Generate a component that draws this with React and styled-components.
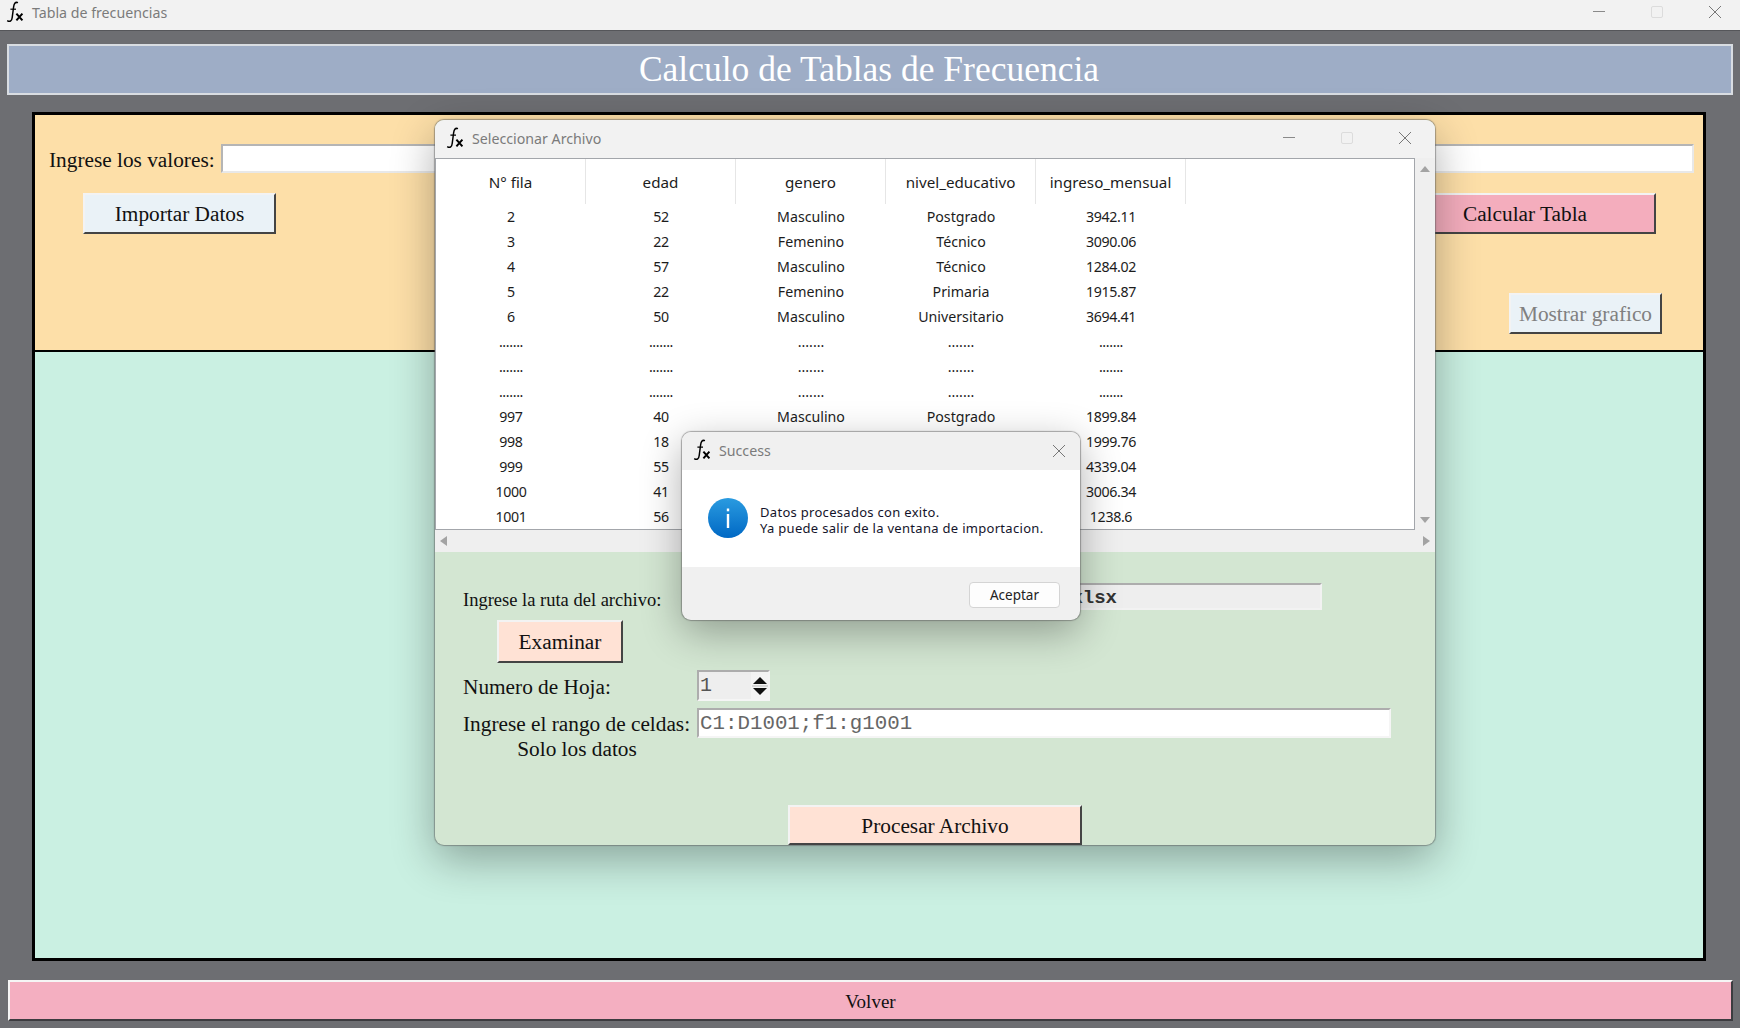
import React from "react";
import styled, { createGlobalStyle } from "styled-components";

const GlobalStyle = createGlobalStyle`
  html, body {
    margin: 0;
    padding: 0;
    background: #6d6e72;
  }
  * {
    box-sizing: border-box;
  }
`;

const columns = ["N° fila", "edad", "genero", "nivel_educativo", "ingreso_mensual"];

// filas 998-1001: genero y nivel quedan tapados por el dialogo
const rows = [
  ["2", "52", "Masculino", "Postgrado", "3942.11"],
  ["3", "22", "Femenino", "Técnico", "3090.06"],
  ["4", "57", "Masculino", "Técnico", "1284.02"],
  ["5", "22", "Femenino", "Primaria", "1915.87"],
  ["6", "50", "Masculino", "Universitario", "3694.41"],
  [".......", ".......", ".......", ".......", "......."],
  [".......", ".......", ".......", ".......", "......."],
  [".......", ".......", ".......", ".......", "......."],
  ["997", "40", "Masculino", "Postgrado", "1899.84"],
  ["998", "18", "", "", "1999.76"],
  ["999", "55", "", "", "4339.04"],
  ["1000", "41", "", "", "3006.34"],
  ["1001", "56", "", "", "1238.6"],
];

const FxIcon = () => (
  <svg width="18" height="22" viewBox="0 0 18 22" fill="none" stroke="#000">
    <path d="M12 1.6 C9 0.6 8 3 7.6 6 L6.2 16.5 C5.8 19.8 4.2 21.4 1.2 19.6" strokeWidth="1.5" />
    <path d="M4.4 8.2 H10" strokeWidth="1.2" />
    <path d="M10.4 12.6 L16.4 19.4 M16.4 12.6 L10.4 19.4" strokeWidth="2" />
  </svg>
);

const MinIcon = () => (
  <svg width="14" height="14" viewBox="0 0 14 14" fill="none" stroke="#8a8a8a">
    <path d="M1 6.5 H13" />
  </svg>
);

const MaxIcon = () => (
  <svg width="14" height="14" viewBox="0 0 14 14" fill="none" stroke="#dcdcdc">
    <rect x="1.5" y="1.5" width="11" height="11" rx="1.5" />
  </svg>
);

const CloseIcon = () => (
  <svg width="14" height="14" viewBox="0 0 14 14" fill="none" stroke="#777">
    <path d="M1 1 L13 13 M13 1 L1 13" />
  </svg>
);

const InfoIcon = () => (
  <svg width="40" height="40" viewBox="0 0 40 40">
    <defs>
      <linearGradient id="infoBlue" x1="0" y1="0" x2="0" y2="1">
        <stop offset="0" stopColor="#2a9be0" />
        <stop offset="1" stopColor="#0068c4" />
      </linearGradient>
    </defs>
    <circle cx="20" cy="20" r="20" fill="url(#infoBlue)" />
    <rect x="18.8" y="16" width="2.4" height="14" fill="#fff" />
    <rect x="18.8" y="10.5" width="2.4" height="2.8" fill="#fff" />
  </svg>
);

const Triangle = ({ dir }) => {
  const shapes = {
    up: "1,9 6,3 11,9",
    down: "1,3 6,9 11,3",
    left: "9,1 2,6 9,11",
    right: "3,1 10,6 3,11",
  };
  return (
    <svg width="12" height="12" viewBox="0 0 12 12">
      <polygon points={shapes[dir]} fill="#a3a3a3" />
    </svg>
  );
};

const App = () => {
  return (
    <Screen>
      <GlobalStyle />
      <TitleBar>
        <FxIcon />
        <TitleText>Tabla de frecuencias</TitleText>
        <Controls>
          <MinIcon />
          <MaxIcon />
          <CloseIcon />
        </Controls>
      </TitleBar>

      <Header>Calculo de Tablas de Frecuencia</Header>

      <MainFrame>
        <TopPanel>
          <ValuesRow>
            <SerifLabel>Ingrese los valores:</SerifLabel>
            <ValuesInput readOnly />
          </ValuesRow>
          <ActionsRow>
            <RaisedButton $bg="#eaf2f7" $w={193} $h={41}>Importar Datos</RaisedButton>
            <RaisedButton $bg="#f4adbd" $w={262} $h={41}>Calcular Tabla</RaisedButton>
          </ActionsRow>
          <ChartRow>
            <RaisedButton $bg="#eaf2f7" $w={153} $h={41} $muted>Mostrar grafico</RaisedButton>
          </ChartRow>
        </TopPanel>
        <BottomPanel />
      </MainFrame>

      <BackButton>Volver</BackButton>

      <FileWindow>
        <WindowBar>
          <FxIcon />
          <TitleText>Seleccionar Archivo</TitleText>
          <WindowControls>
            <MinIcon />
            <MaxIcon />
            <CloseIcon />
          </WindowControls>
        </WindowBar>

        <TableArea>
          <TableBox>
            <HeadRow>
              {columns.map((c) => (
                <HeadCell key={c}>{c}</HeadCell>
              ))}
            </HeadRow>
            {rows.map((row, i) => (
              <DataRow key={i}>
                {row.map((v, j) => (
                  <DataCell key={j} $numeric={j !== 2 && j !== 3}>{v}</DataCell>
                ))}
              </DataRow>
            ))}
          </TableBox>
          <VScroll>
            <Triangle dir="up" />
            <Triangle dir="down" />
          </VScroll>
        </TableArea>
        <HScroll>
          <Triangle dir="left" />
          <Triangle dir="right" />
        </HScroll>

        <FileForm>
          <PathRow>
            <PathLabel>Ingrese la ruta del archivo:</PathLabel>
            <PathInput readOnly value=".xlsx" />
          </PathRow>
          <BrowseRow>
            <RaisedButton $bg="#ffe2d5" $w={126} $h={43}>Examinar</RaisedButton>
          </BrowseRow>
          <SheetRow>
            <FormLabel>Numero de Hoja:</FormLabel>
            <Spinner>
              <SpinnerValue readOnly value="1" />
              <SpinnerArrows>
                <svg width="16" height="26" viewBox="0 0 16 26">
                  <polygon points="1,11 8,4 15,11" fill="#111" />
                  <path d="M0 13 H16" stroke="#bbb" />
                  <polygon points="1,15 8,22 15,15" fill="#111" />
                </svg>
              </SpinnerArrows>
            </Spinner>
          </SheetRow>
          <RangeRow>
            <FormLabel>Ingrese el rango de celdas:</FormLabel>
            <RangeInput readOnly value="C1:D1001;f1:g1001" />
          </RangeRow>
          <HintLabel>Solo los datos</HintLabel>
          <SubmitRow>
            <RaisedButton $bg="#ffe2d5" $w={294} $h={40}>Procesar Archivo</RaisedButton>
          </SubmitRow>
        </FileForm>
      </FileWindow>

      <SuccessDialog>
        <DialogBar>
          <FxIcon />
          <TitleText>Success</TitleText>
          <DialogClose>
            <CloseIcon />
          </DialogClose>
        </DialogBar>
        <DialogBody>
          <InfoIcon />
          <DialogText>
            <div>Datos procesados con exito.</div>
            <div>Ya puede salir de la ventana de importacion.</div>
          </DialogText>
        </DialogBody>
        <DialogFooter>
          <AcceptButton>Aceptar</AcceptButton>
        </DialogFooter>
      </SuccessDialog>
    </Screen>
  );
};

const Screen = styled.div`
  position: relative;
  width: 1740px;
  height: 1028px;
  overflow: hidden;
  background: #6d6e72;
  font-family: "Liberation Serif", serif;
`;

const TitleBar = styled.div`
  display: flex;
  align-items: center;
  height: 31px;
  padding: 0 18px 6px 6px;
  background: #f2f2f2;
  border-bottom: 1px solid #55565a;
`;

const TitleText = styled.span`
  margin-left: 8px;
  font-family: "Noto Sans", sans-serif;
  font-size: 14.2px;
  color: #7b7b7b;
`;

const Controls = styled.div`
  display: flex;
  align-items: center;
  gap: 44px;
  margin-left: auto;
`;

const Header = styled.div`
  display: flex;
  align-items: center;
  justify-content: center;
  width: 1726px;
  height: 51px;
  margin: 13px 0 0 7px;
  padding: 0 2px 2px 0;
  background: #9eadc6;
  border: 2px solid #d9dde2;
  color: #fff;
  font-size: 35.5px;
`;

const MainFrame = styled.div`
  display: flex;
  flex-direction: column;
  width: 1674px;
  height: 849px;
  margin: 17px 0 0 32px;
  border: 3px solid #000;
`;

const TopPanel = styled.div`
  height: 237px;
  padding: 29px 9px 0 14px;
  background: #fddfa8;
  border-bottom: 2px solid #000;
`;

const ValuesRow = styled.div`
  display: flex;
  align-items: center;
  gap: 6px;
`;

const SerifLabel = styled.span`
  padding-top: 2px;
  font-size: 21.3px;
  line-height: 24px;
  color: #111;
  white-space: nowrap;
`;

const ValuesInput = styled.input`
  flex: 1;
  height: 29px;
  background: #fff;
  border: 2px solid #e8e8e8;
  border-top-color: #b5b5b5;
  border-left-color: #b5b5b5;
  outline: none;
`;

const ActionsRow = styled.div`
  display: flex;
  justify-content: space-between;
  margin-top: 20px;
  padding: 0 38px 0 34px;
`;

const ChartRow = styled.div`
  display: flex;
  justify-content: flex-end;
  margin-top: 59px;
  padding-right: 32px;
`;

const RaisedButton = styled.button`
  width: ${(p) => p.$w}px;
  height: ${(p) => p.$h}px;
  padding: 2px 0 0;
  background: ${(p) => p.$bg};
  border: 2px solid #444;
  border-top-color: #f3f3f3;
  border-left-color: #f3f3f3;
  color: ${(p) => (p.$muted ? "#808080" : "#111")};
  font-family: "Liberation Serif", serif;
  font-size: 21.3px;
`;

const BottomPanel = styled.div`
  flex: 1;
  background: #caf0e2;
`;

const BackButton = styled.button`
  display: block;
  width: 1725px;
  height: 41px;
  margin: 19px 0 0 8px;
  padding: 2px 0 0;
  background: #f4afc1;
  border: 2px solid #3c3c40;
  border-top-color: #f5f5f5;
  border-left-color: #f5f5f5;
  color: #111;
  font-family: "Liberation Serif", serif;
  font-size: 19px;
`;

const FileWindow = styled.div`
  position: absolute;
  left: 435px;
  top: 120px;
  display: flex;
  flex-direction: column;
  width: 1000px;
  height: 725px;
  overflow: hidden;
  background: #d3e6d2;
  border-radius: 9px;
  box-shadow: 0 0 1px 1px rgba(90, 90, 90, 0.5), 0 14px 44px rgba(0, 0, 0, 0.32);
`;

const WindowBar = styled.div`
  display: flex;
  flex: none;
  align-items: center;
  height: 38px;
  padding: 0 23px 2px 11px;
  background: #f2f2f2;
`;

const WindowControls = styled.div`
  display: flex;
  align-items: center;
  gap: 44px;
  margin-left: auto;
`;

const TableArea = styled.div`
  display: flex;
  flex: none;
  height: 372px;
  background: #efefef;
`;

const TableBox = styled.div`
  width: 980px;
  height: 372px;
  overflow: hidden;
  background: #fff;
  border: 1px solid #a3a6ab;
  color: #1c1c1c;
  font-family: "Noto Sans", sans-serif;
`;

const HeadRow = styled.div`
  display: flex;
  height: 45px;
`;

const HeadCell = styled.div`
  display: flex;
  align-items: center;
  justify-content: center;
  width: 150px;
  border-right: 1px solid #e6e6e6;
  font-size: 15.2px;
`;

const DataRow = styled.div`
  display: flex;
  height: 25px;
`;

const DataCell = styled.div`
  width: 150px;
  font-size: 14.2px;
  letter-spacing: ${(p) => (p.$numeric ? "-0.35px" : "0")};
  line-height: 25px;
  text-align: center;
`;

const VScroll = styled.div`
  display: flex;
  flex: 1;
  flex-direction: column;
  align-items: center;
  justify-content: space-between;
  padding: 5px 0 4px;
`;

const HScroll = styled.div`
  display: flex;
  flex: none;
  align-items: center;
  justify-content: space-between;
  height: 22px;
  padding: 0 3px;
  background: #efefef;
`;

const FileForm = styled.div`
  display: flex;
  flex: 1;
  flex-direction: column;
  padding: 31px 0 0 28px;
`;

const FormRow = styled.div`
  display: flex;
  align-items: center;
`;

const PathRow = styled(FormRow)`
  height: 27px;
`;

const FormLabel = styled.span`
  flex: none;
  width: 234px;
  padding-top: 2px;
  font-size: 21.3px;
  line-height: 24px;
  color: #111;
  white-space: nowrap;
`;

const PathLabel = styled(FormLabel)`
  padding-top: 7px;
  font-size: 18.5px;
  line-height: 20px;
`;

const PathInput = styled.input`
  width: 625px;
  height: 27px;
  padding: 2px 203px 0 0;
  background: #eee;
  border: 2px solid #f2f2f2;
  border-top-color: #adadad;
  border-left-color: #adadad;
  color: #333;
  font-family: "Liberation Mono", monospace;
  font-size: 19px;
  font-weight: 700;
  text-align: right;
  outline: none;
`;

const BrowseRow = styled.div`
  margin: 10px 0 0 34px;
  display: flex;
`;

const SheetRow = styled(FormRow)`
  margin-top: 7px;
`;

const Spinner = styled.div`
  display: flex;
  width: 73px;
  height: 31px;
  background: #eee;
  border: 2px solid #f5f5f5;
  border-top-color: #adadad;
  border-left-color: #adadad;
`;

const SpinnerValue = styled.input`
  width: 52px;
  padding: 0 0 0 1px;
  background: transparent;
  border: none;
  color: #555;
  font-family: "Liberation Mono", monospace;
  font-size: 20px;
  outline: none;
`;

const SpinnerArrows = styled.div`
  display: flex;
  flex: 1;
  align-items: center;
  justify-content: center;
  background: #f4f4f4;
`;

const RangeRow = styled(FormRow)`
  margin-top: 7px;
`;

const RangeInput = styled.input`
  width: 694px;
  height: 30px;
  padding: 0 0 0 1px;
  background: #fff;
  border: 2px solid #f5f5f5;
  border-top-color: #adadad;
  border-left-color: #adadad;
  color: #666;
  font-family: "Liberation Mono", monospace;
  font-size: 20.8px;
  outline: none;
`;

const HintLabel = styled.div`
  width: 228px;
  font-size: 21.3px;
  line-height: 22px;
  color: #111;
  text-align: center;
`;

const SubmitRow = styled.div`
  display: flex;
  margin: auto 0 0 325px;
`;

const SuccessDialog = styled.div`
  position: absolute;
  left: 682px;
  top: 432px;
  display: flex;
  flex-direction: column;
  width: 398px;
  height: 188px;
  overflow: hidden;
  background: #f0f0f0;
  border-radius: 9px;
  box-shadow: 0 0 1px 1px rgba(90, 90, 90, 0.5), 0 12px 40px rgba(0, 0, 0, 0.32);
`;

const DialogBar = styled.div`
  display: flex;
  flex: none;
  align-items: center;
  height: 38px;
  padding: 0 14px 2px 11px;
  background: #f0f0f0;
`;

const DialogClose = styled.div`
  display: flex;
  margin-left: auto;
  padding-top: 2px;
`;

const DialogBody = styled.div`
  display: flex;
  flex: none;
  align-items: center;
  gap: 12px;
  height: 97px;
  padding: 0 0 1px 26px;
  background: #fff;
`;

const DialogText = styled.div`
  padding-top: 3px;
  color: #14142b;
  font-family: "Noto Sans", sans-serif;
  font-size: 13px;
  line-height: 16px;
  letter-spacing: 0.3px;
`;

const DialogFooter = styled.div`
  display: flex;
  flex: 1;
  align-items: center;
  justify-content: flex-end;
  padding: 2px 20px 0 0;
`;

const AcceptButton = styled.button`
  width: 91px;
  height: 26px;
  padding: 0;
  background: #fdfdfd;
  border: 1px solid #d4d4d4;
  border-radius: 4px;
  color: #222;
  font-family: "Noto Sans", sans-serif;
  font-size: 13.5px;
`;

export default App;
